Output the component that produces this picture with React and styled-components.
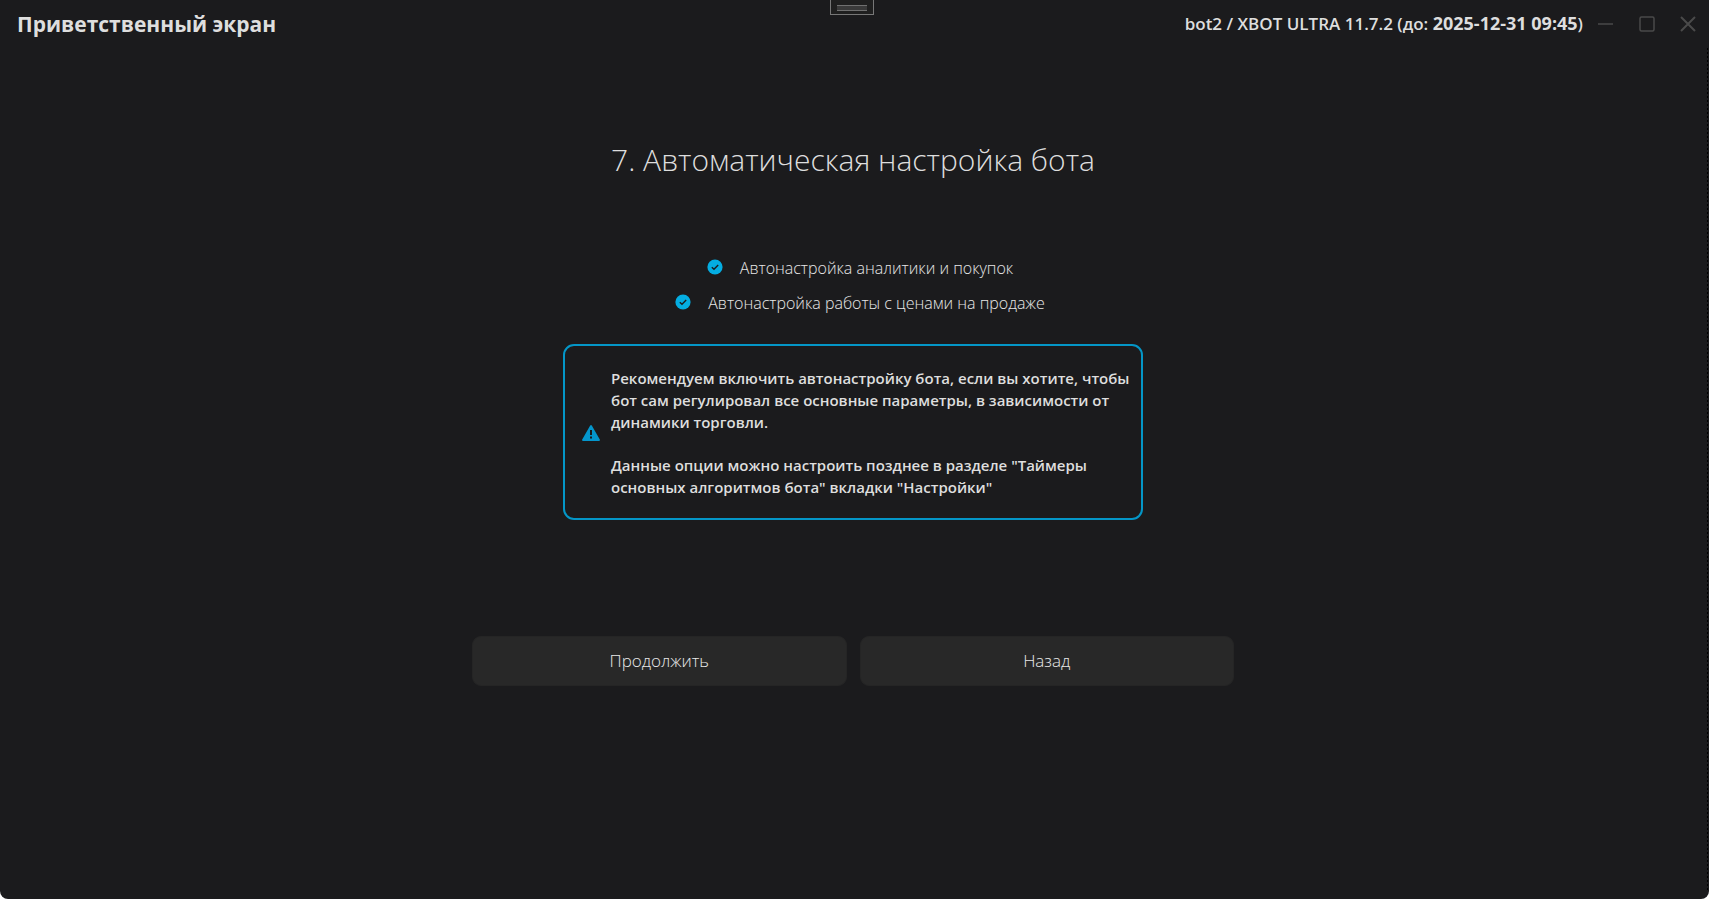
import React from "react";
import styled, { createGlobalStyle } from "styled-components";

const GlobalStyle = createGlobalStyle`
  * {
    box-sizing: border-box;
  }

  body {
    margin: 0;
    background: #ffffff;
    font-family: "Open Sans", "Noto Sans", sans-serif;
    color: #dedede;
  }
`;

const Window = styled.div`
  position: relative;
  display: flex;
  flex-direction: column;
  min-height: 100vh;
  background: #1b1b1d;
  border-radius: 0 0 8px 8px;

  /* dotted resize edge */
  &::after {
    content: "";
    position: absolute;
    top: 48px;
    right: 1px;
    bottom: 8px;
    width: 1px;
    background: repeating-linear-gradient(#000000 0 2px, transparent 2px 4px);
  }
`;

const DragHandle = styled.div`
  position: absolute;
  top: 0;
  left: 50%;
  width: 44px;
  height: 15px;
  margin-left: -25px;
  padding: 5px 6px;
  border: 1px solid #777777;
  border-top: none;
  background: #1f1f1f;

  &::before {
    content: "";
    display: block;
    height: 4px;
    border: 1px solid #707070;
    border-width: 1px 0;
    background: #3a3a3a;
  }
`;

const TitleBar = styled.header`
  display: flex;
  justify-content: space-between;
  align-items: center;
  height: 48px;
  padding: 0 13px 0 17px;
`;

const Title = styled.h1`
  margin: 0;
  font-size: 21px;
  font-weight: 700;
  line-height: 28px;
`;

const License = styled.div`
  display: flex;
  align-items: center;
  gap: 15px;
  font-size: 17px;
  font-weight: 600;
  line-height: 24px;

  b {
    font-size: 18px;
    font-weight: 700;
    line-height: 20px;
  }
`;

const WindowControls = styled.div`
  display: flex;
  gap: 25px;
`;

const ControlButton = styled.button`
  display: flex;
  width: 16px;
  height: 16px;
  padding: 0;
  border: none;
  background: none;
  color: #4a4a4a;
`;

const Content = styled.main`
  display: flex;
  flex-direction: column;
  align-items: center;
  padding: 88px 19px 0 16px;
`;

const Heading = styled.h2`
  margin: 0;
  font-size: 30px;
  font-weight: 300;
  line-height: 48px;
`;

const Options = styled.ul`
  display: flex;
  flex-direction: column;
  align-items: center;
  gap: 11px;
  margin: 72px 0 0;
  padding: 0 0 0 14px;
  list-style: none;
`;

const Option = styled.li`
  display: flex;
  align-items: flex-start;
  gap: 17px;
  color: #e8e8e8;
  font-size: 16px;
  font-weight: 300;
  line-height: 24px;

  svg {
    margin-top: 3px;
  }
`;

const Notice = styled.section`
  display: flex;
  align-items: center;
  gap: 11px;
  width: 100%;
  max-width: 580px;
  margin-top: 29px;
  padding: 21px 11px 20px 17px;
  border: 2px solid #0496c7;
  border-radius: 11px;
  font-size: 15px;
  font-weight: 600;
  line-height: 22px;

  svg {
    flex: none;
  }

  p {
    margin: 0;
  }

  p + p {
    margin-top: 21px;
  }
`;

const Actions = styled.div`
  display: flex;
  gap: 13px;
  width: 100%;
  max-width: 762px;
  margin-top: 116px;
`;

const ActionButton = styled.button`
  flex: 1;
  height: 50px;
  padding: 0 6px 2px;
  border: 1px solid #252525;
  border-radius: 9px;
  background: #282828;
  color: #e8e8e8;
  font-family: inherit;
  font-size: 17px;
  font-weight: 300;
`;

function CheckIcon() {
  return (
    <svg width="16" height="16" viewBox="0 0 16 16" aria-hidden="true">
      <circle cx="8" cy="8" r="7.6" fill="#04ade2" />
      <path d="M4.8 8.2 7 10.3l4.2-4.2" fill="none" stroke="#1b1b1d" strokeWidth="1.4" />
    </svg>
  );
}

function WarningIcon() {
  return (
    <svg width="18" height="18" viewBox="0 0 18 18" aria-hidden="true">
      <path
        d="M8.2 1.4a.9.9 0 0 1 1.6 0l8 14.2a.9.9 0 0 1-.8 1.4H1a.9.9 0 0 1-.8-1.4z"
        fill="#0496cc"
      />
      <path d="M8 6h2v5H8zM8 12.6h2v2H8z" fill="#1b1b1d" />
    </svg>
  );
}

function ControlIcon({ children }) {
  return (
    <svg width="16" height="16" viewBox="0 0 16 16" fill="none" stroke="currentColor" strokeWidth="1.5" aria-hidden="true">
      {children}
    </svg>
  );
}

const options = [
  "Автонастройка аналитики и покупок",
  "Автонастройка работы с ценами на продаже",
];

export default function App() {
  return (
    <>
      <GlobalStyle />
      <Window>
        <DragHandle />
        <TitleBar>
          <Title>Приветственный экран</Title>
          <License>
            <span>
              bot2 / XBOT ULTRA 11.7.2 (до: <b>2025-12-31 09:45</b>)
            </span>
            <WindowControls>
              <ControlButton aria-label="Свернуть">
                <ControlIcon>
                  <path d="M0 8h15" />
                </ControlIcon>
              </ControlButton>
              <ControlButton aria-label="Развернуть">
                <ControlIcon>
                  <rect x="1" y="1" width="14" height="14" rx="1.5" />
                </ControlIcon>
              </ControlButton>
              <ControlButton aria-label="Закрыть">
                <ControlIcon>
                  <path d="M1 1l14 14M15 1 1 15" strokeWidth="2" />
                </ControlIcon>
              </ControlButton>
            </WindowControls>
          </License>
        </TitleBar>
        <Content>
          <Heading>7. Автоматическая настройка бота</Heading>
          <Options>
            {options.map((text) => (
              <Option key={text}>
                <CheckIcon />
                <span>{text}</span>
              </Option>
            ))}
          </Options>
          <Notice>
            <WarningIcon />
            <div>
              <p>
                Рекомендуем включить автонастройку бота, если вы хотите, чтобы
                бот сам регулировал все основные параметры, в зависимости от
                динамики торговли.
              </p>
              <p>
                Данные опции можно настроить позднее в разделе "Таймеры
                основных алгоритмов бота" вкладки "Настройки"
              </p>
            </div>
          </Notice>
          <Actions>
            <ActionButton>Продолжить</ActionButton>
            <ActionButton>Назад</ActionButton>
          </Actions>
        </Content>
      </Window>
    </>
  );
}
